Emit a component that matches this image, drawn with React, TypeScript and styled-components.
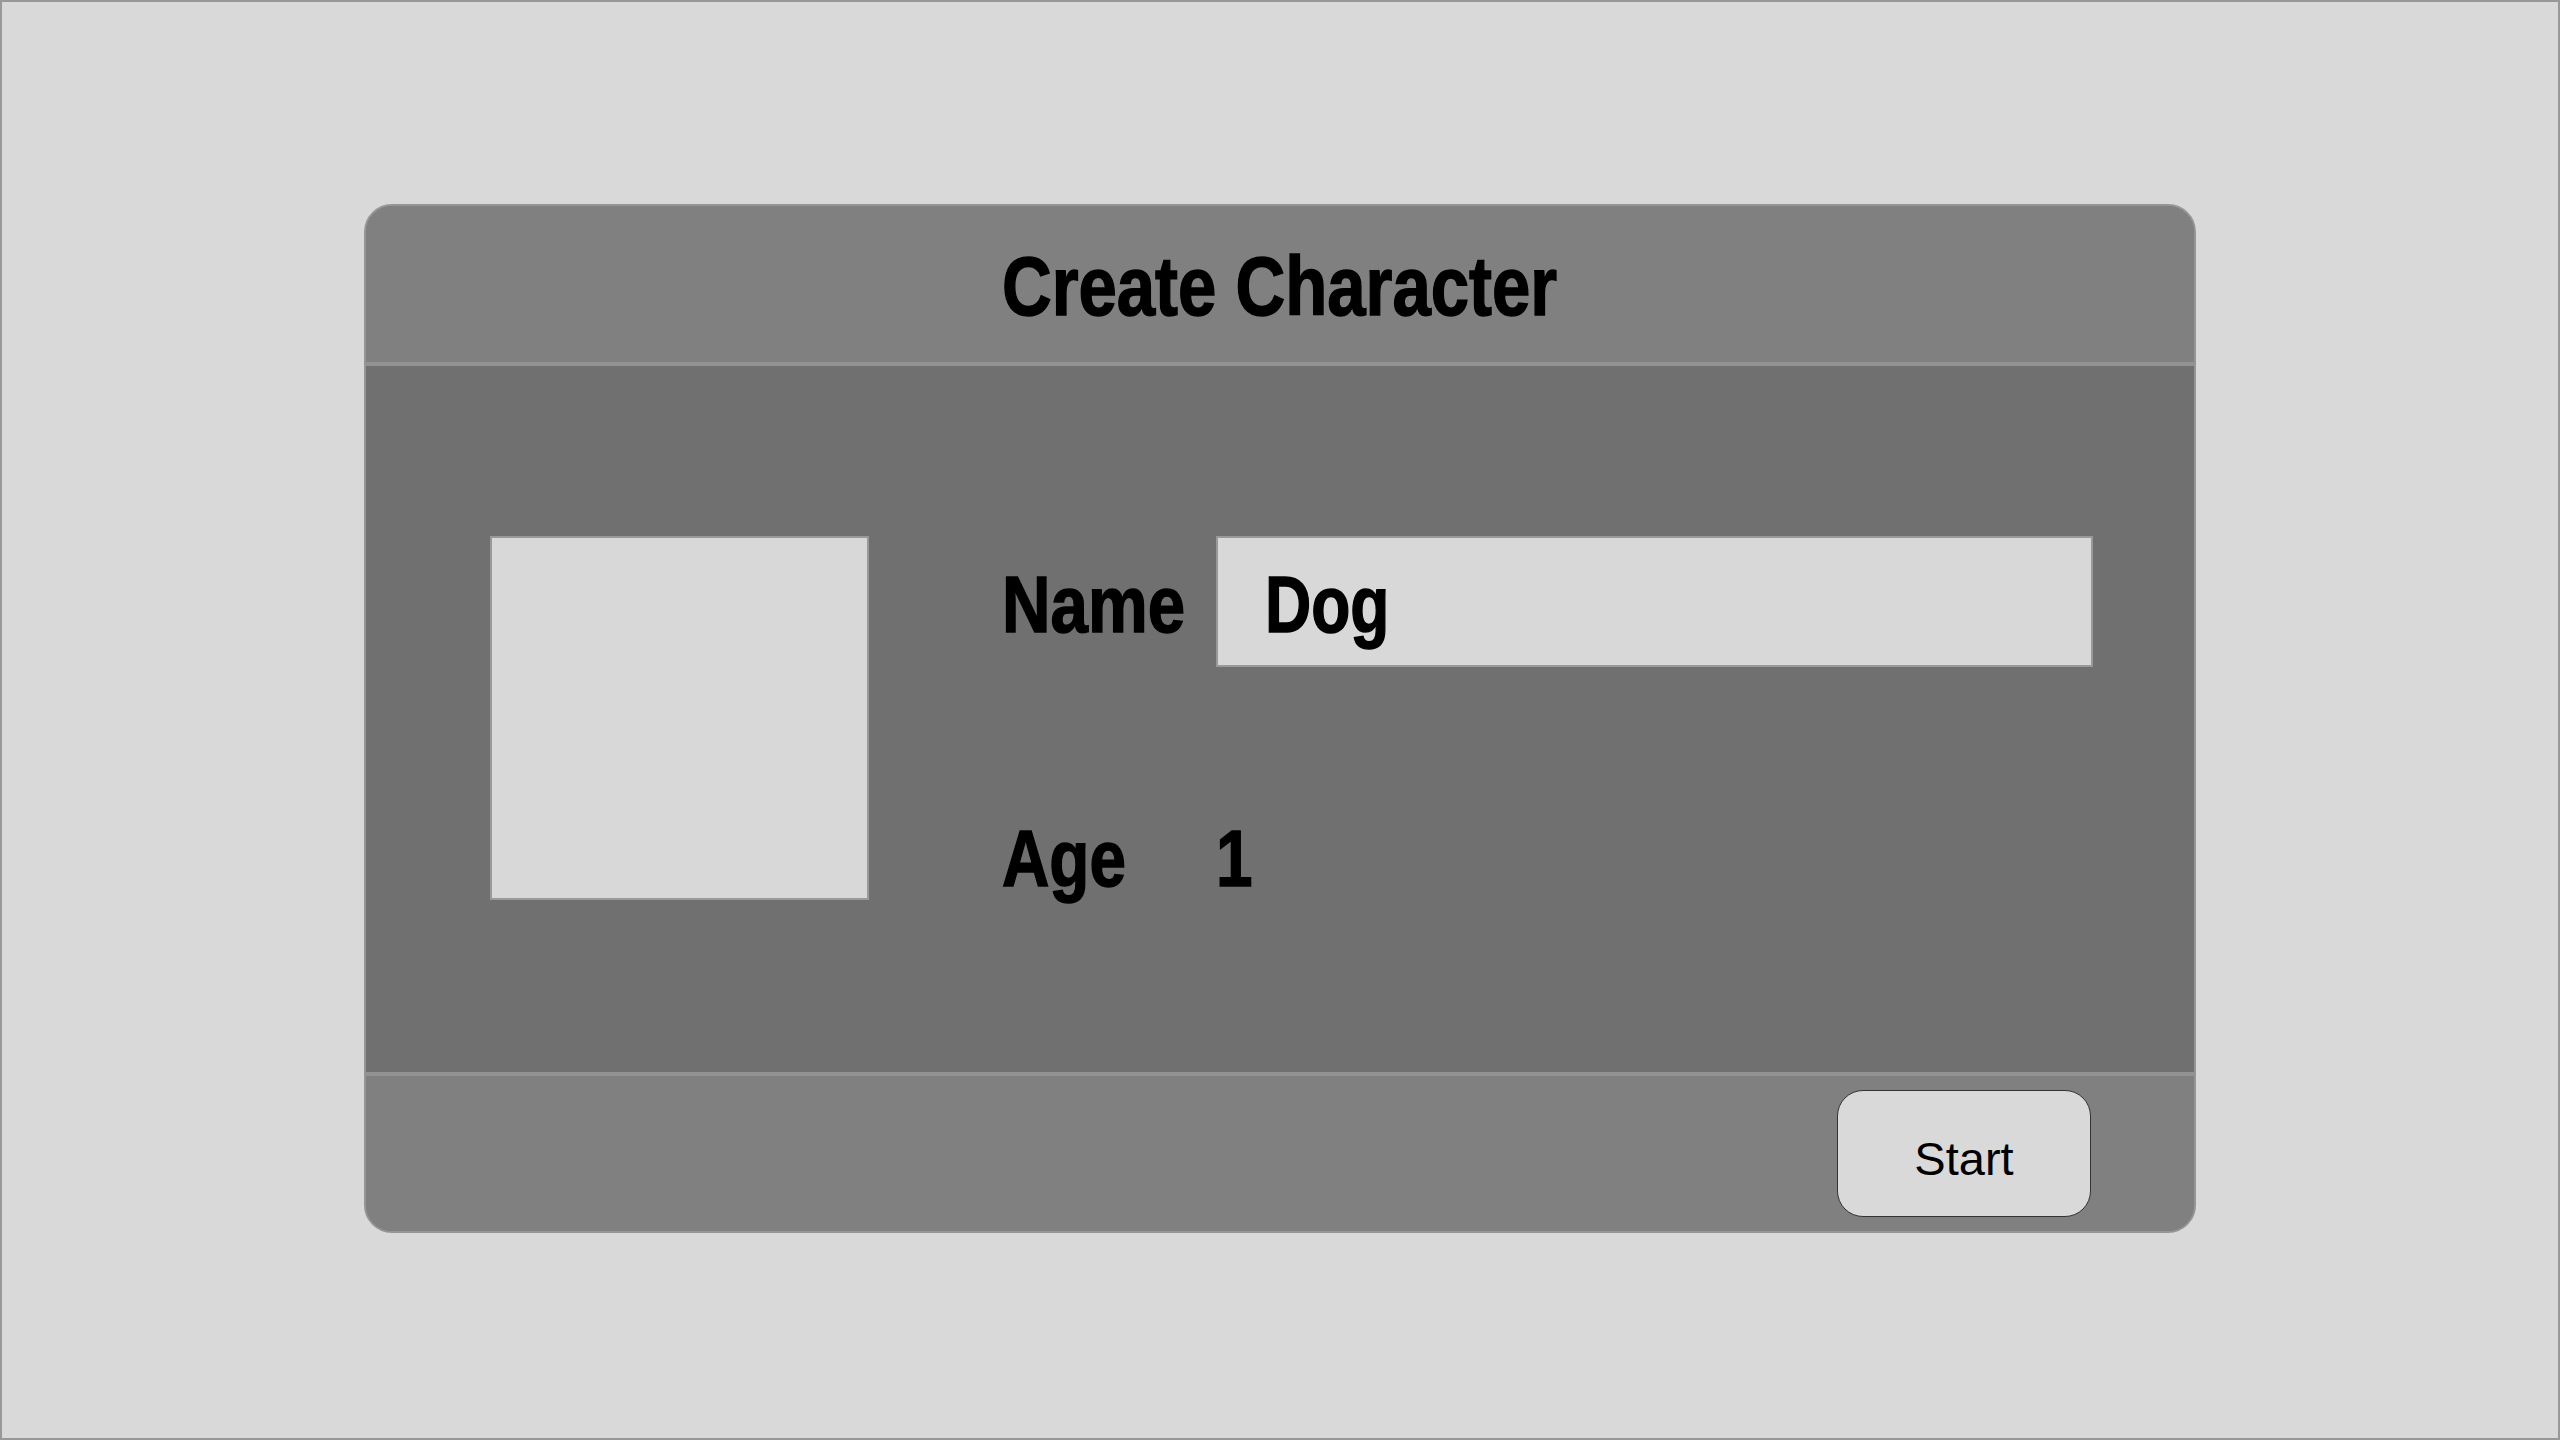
import React from "react";
import styled, { createGlobalStyle } from "styled-components";

const Global = createGlobalStyle`
  html, body { margin: 0; padding: 0; }
  body { font-family: "Liberation Sans", Arial, sans-serif; }
  * { box-sizing: border-box; }
`;

const Page = styled.div`
  width: 2560px;
  height: 1440px;
  background: #d9d9d9;
  border: 2px solid #999999;
  display: flex;
  justify-content: center;
  align-items: flex-start;
  padding-top: 202px;
`;

const Panel = styled.div`
  width: 1832px;
  height: 1029px;
  border: 2px solid #959595;
  border-radius: 28px;
  overflow: hidden;
  display: flex;
  flex-direction: column;
  background: #808080;
`;

const condensed = `
  display: inline-block;
  font-family: "Liberation Sans", Arial, sans-serif;
  font-weight: 700;
  color: #000;
  -webkit-text-stroke: 1.5px #000;
  line-height: 1;
  white-space: nowrap;
`;

const Header = styled.header`
  height: 160px;
  flex: none;
  background: #808080;
  border-bottom: 4px solid #929292;
  display: flex;
  align-items: center;
  justify-content: center;
  padding-top: 4px;
`;

const Title = styled.h1`
  ${condensed}
  margin: 0;
  font-size: 84px;
  transform: scaleX(0.82);
  transform-origin: center;
`;

const Body = styled.main`
  flex: 1;
  background: #707070;
  display: flex;
  align-items: flex-start;
  padding: 170px 100px 0 124px;
`;

const Portrait = styled.div`
  width: 379px;
  height: 364px;
  flex: none;
  background: #d8d8d8;
  border: 2px solid #999999;
`;

const Form = styled.div`
  margin-left: 133px;
  display: grid;
  grid-template-columns: 214px 877px;
  grid-auto-rows: 131px;
  row-gap: 123px;
  align-items: center;
`;

const Text = styled.span<{ $scale: number }>`
  ${condensed}
  font-size: 80px;
  padding-top: 6px;
  transform: scaleX(${(p) => p.$scale});
  transform-origin: left center;
`;

const NameInput = styled.div`
  height: 131px;
  background: #d8d8d8;
  border: 2px solid #999999;
  display: flex;
  align-items: center;
  padding-left: 47px;
`;

const Footer = styled.footer`
  height: 159px;
  flex: none;
  background: #808080;
  border-top: 4px solid #929292;
  display: flex;
  align-items: center;
  justify-content: flex-end;
  padding-right: 103px;
`;

const StartButton = styled.button`
  width: 254px;
  height: 127px;
  background: #d9d9d9;
  border: 1.5px solid #333333;
  border-radius: 26px;
  font-family: "Liberation Sans", Arial, sans-serif;
  font-size: 47px;
  color: #000;
  padding: 10px 0 0;
  cursor: pointer;
`;

export default function App() {
  return (
    <>
      <Global />
      <Page>
        <Panel>
          <Header>
            <Title>Create Character</Title>
          </Header>
          <Body>
            <Portrait />
            <Form>
              <Text $scale={0.84}>Name</Text>
              <NameInput>
                <Text $scale={0.8}>Dog</Text>
              </NameInput>
              <Text $scale={0.82}>Age</Text>
              <Text $scale={0.82}>1</Text>
            </Form>
          </Body>
          <Footer>
            <StartButton>Start</StartButton>
          </Footer>
        </Panel>
      </Page>
    </>
  );
}
